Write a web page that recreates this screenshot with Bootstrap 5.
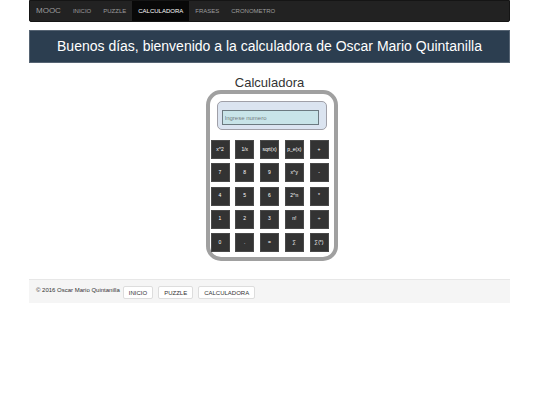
<!DOCTYPE html>
<html lang="es">
<head>
<meta charset="utf-8">
<meta name="viewport" content="width=device-width, initial-scale=1">
<title>Calculadora</title>
<link href="https://cdn.jsdelivr.net/npm/bootstrap@5.3.0/dist/css/bootstrap.min.css" rel="stylesheet">
<style>
body { font-family: "Liberation Sans", Arial, sans-serif; font-size: 6px; line-height: 9px; color: #333; background: #fff; }
.page { padding: 0 30px 0 29px; }
.topbar { background: #222; border: 1px solid #151515; border-radius: 0 0 2px 2px; padding: 0; }
.topbar .navbar-brand { font-size: 8px; line-height: 20px; padding: 0; margin: 0 6px; color: #9d9d9d; }
.topbar .navbar-nav .nav-link { font-size: 6px; line-height: 20px; padding: 0 6px; color: #9d9d9d; }
.topbar .navbar-nav .nav-link.active { background: #080808; color: #fff; }
.welcome { background: #2c3e50; border: 1px solid #566473; color: #fff; font-size: 14px; line-height: 31px; margin: 8px 0 13px; }
.calc-title { font-size: 13px; line-height: 14px; margin: 0; color: #333; }
.calc { width: 132px; border: 4px solid #a0a0a0; border-radius: 15px; padding: 7px 5px 5px 2px; margin-left: 4px; }
.display { background: #dbe4f0; border: 1px solid #a0a0a8; border-radius: 5px; margin: 0 2px 10px 5px; padding: 8px 7px 4px 4px; }
.display input { min-height: 0; height: 15px; background: #c8e4e8; border: 1px solid #6c7a80; border-radius: 0; padding: 0 2px; font-size: 6px; line-height: 13px; color: #333; }
.display input::placeholder { color: #757d80; }
.keys { display: grid; grid-template-columns: repeat(5, 19px); grid-auto-rows: 19px; justify-content: space-between; align-content: space-between; height: 112px; margin: 0 0 0 -1px; }
.keys button { background: #333; border: 1px solid #494949; color: #fff; font-size: 5px; line-height: 6px; padding: 0 0 2px; }
.foot { background: #f5f5f5; border-top: 1px solid #e7e7e7; margin-top: 18px; padding: 6px 7px 4px; gap: 5px; }
.foot p { line-height: 9px; margin: 0 -2px 0 0; }
.foot a { background: #fff; border: 1px solid #ddd; border-radius: 2px; padding: 2px 5px 0; line-height: 9px; color: #333; font-size: 6px; }
</style>
<script src="https://cdn.jsdelivr.net/npm/bootstrap@5.3.0/dist/js/bootstrap.bundle.min.js"></script>
</head>
<body>
<div class="container-fluid page">
  <nav class="navbar navbar-expand topbar">
    <a class="navbar-brand" href="#">MOOC</a>
    <ul class="navbar-nav">
      <li class="nav-item"><a class="nav-link" href="#">INICIO</a></li>
      <li class="nav-item"><a class="nav-link" href="#">PUZZLE</a></li>
      <li class="nav-item"><a class="nav-link active" aria-current="page" href="#">CALCULADORA</a></li>
      <li class="nav-item"><a class="nav-link" href="#">FRASES</a></li>
      <li class="nav-item"><a class="nav-link" href="#">CRONOMETRO</a></li>
    </ul>
  </nav>
  <h1 class="welcome text-center fw-normal">Buenos días, bienvenido a la calculadora de Oscar Mario Quintanilla</h1>
  <main class="d-flex flex-column align-items-center">
    <h2 class="calc-title fw-normal">Calculadora</h2>
    <div class="calc">
      <div class="display">
        <input class="form-control" type="text" placeholder="Ingrese numero" aria-label="Ingrese numero">
      </div>
      <div class="keys">
        <button type="button">x^2</button><button type="button">1/x</button><button type="button">sqrt(x)</button><button type="button">p_e(x)</button><button type="button">+</button>
        <button type="button">7</button><button type="button">8</button><button type="button">9</button><button type="button">x^y</button><button type="button">-</button>
        <button type="button">4</button><button type="button">5</button><button type="button">6</button><button type="button">2^n</button><button type="button">*</button>
        <button type="button">1</button><button type="button">2</button><button type="button">3</button><button type="button">n!</button><button type="button">÷</button>
        <button type="button">0</button><button type="button">.</button><button type="button">=</button><button type="button">∑</button><button type="button">∑(*)</button>
      </div>
    </div>
  </main>
  <footer class="foot d-flex align-items-start">
    <p>© 2016 Oscar Mario Quintanilla</p>
    <a class="text-decoration-none" href="#">INICIO</a>
    <a class="text-decoration-none" href="#">PUZZLE</a>
    <a class="text-decoration-none" href="#">CALCULADORA</a>
  </footer>
</div>
</body>
</html>
